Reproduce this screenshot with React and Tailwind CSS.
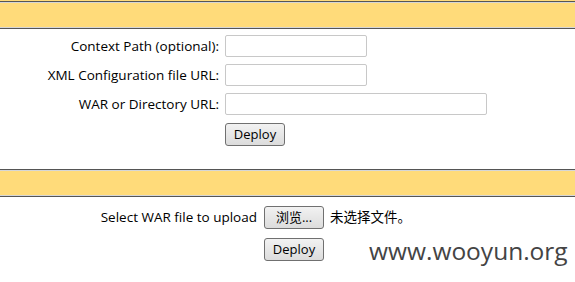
import React from "react";

const Btn = ({ children }) => (
  <button
    type="button"
    className="h-[23px] w-[60px] rounded-[3px] border border-[#707070] bg-gradient-to-b from-[#f2f2f2] to-[#dcdcdc] text-[13px] text-black leading-none"
  >
    {children}
  </button>
);

const Bar = () => (
  <div className="border-y border-[#555]">
    <div className="h-[26px] border-y border-[#d6d6d6] bg-[#ffdb7a]" />
  </div>
);

export default function App() {
  return (
    <div
      className="relative h-[282px] w-[575px] overflow-hidden bg-white text-[13.5px] text-black"
      style={{ fontFamily: '"Open Sans", "Noto Sans CJK SC", sans-serif' }}
    >
      <div className="h-px bg-[#ffdb7a]" />
      <Bar />

      {/* Deploy directory or WAR file located on server */}
      <div className="flex flex-col gap-[7px] pt-[6px] pb-[23px]">
        <div className="flex items-center">
          <label className="w-[220px] pr-[1px] text-right">Context Path (optional):</label>
          <input className="ml-[5px] h-[22px] w-[142px] rounded-[2px] border border-[#c8c8c8]" />
        </div>
        <div className="flex items-center">
          <label className="w-[220px] pr-[1px] text-right">XML Configuration file URL:</label>
          <input className="ml-[5px] h-[22px] w-[142px] rounded-[2px] border border-[#c8c8c8]" />
        </div>
        <div className="flex items-center">
          <label className="w-[220px] pr-[1px] text-right">WAR or Directory URL:</label>
          <input className="ml-[5px] h-[22px] w-[262px] rounded-[2px] border border-[#c8c8c8]" />
        </div>
        <div className="flex pl-[225px] pt-[1px]">
          <Btn>Deploy</Btn>
        </div>
      </div>

      <Bar />

      {/* WAR file to deploy */}
      <div className="flex flex-col gap-[9px] pt-[9px]">
        <div className="flex items-center">
          <span className="w-[258px] pr-[1px] text-right">Select WAR file to upload</span>
          <span className="ml-[6px]">
            <Btn>浏览...</Btn>
          </span>
          <span className="ml-[6px]">未选择文件。</span>
        </div>
        <div className="flex pl-[264px]">
          <Btn>Deploy</Btn>
        </div>
      </div>

      <div
        className="absolute left-[369px] top-[236px] text-[24.5px] leading-[30px] text-[#444]"
        style={{ fontFamily: '"Open Sans", sans-serif' }}
      >
        www.wooyun.org
      </div>
    </div>
  );
}
